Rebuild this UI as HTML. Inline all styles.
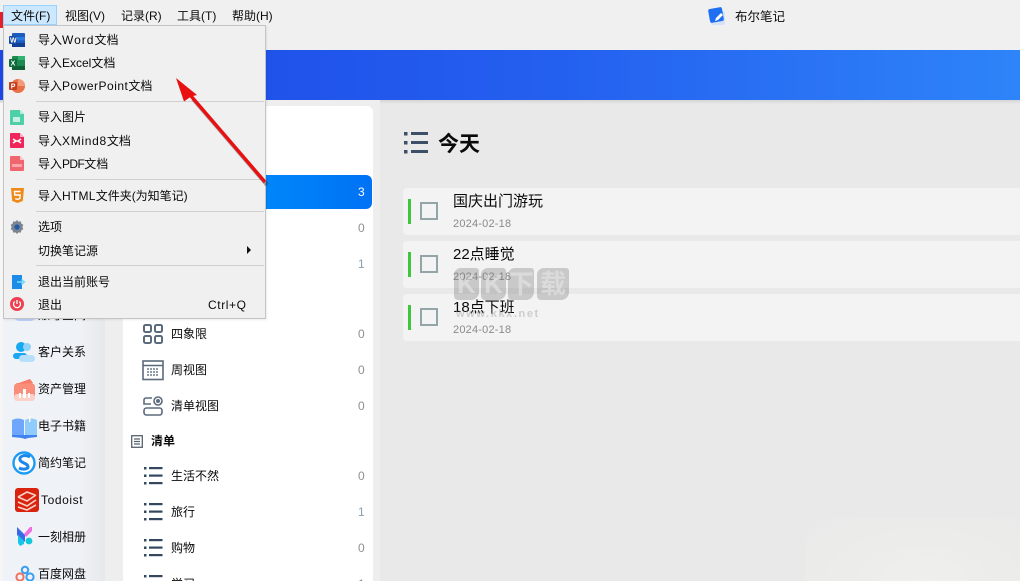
<!DOCTYPE html>
<html lang="zh"><head><meta charset="utf-8"><style>
html,body{margin:0;padding:0;width:1020px;height:581px;overflow:hidden;background:#e9e9e9}
body{position:relative;font-family:"Liberation Sans","Noto Sans CJK SC",sans-serif;font-size:12px;color:#0a0a0a}
.a{position:absolute}
.t{position:absolute;white-space:nowrap;line-height:16px;height:16px}
svg{position:absolute;overflow:visible}
.sep{position:absolute;left:32px;width:228px;height:1px;background:#d0d0d0}
.cnt{position:absolute;left:358px;width:8px;color:#8f8f8f;line-height:16px;font-size:12px}
.card{position:absolute;left:403px;width:617px;height:47px;background:#f3f3f3;border-radius:4px 0 0 4px}
.card i{position:absolute;left:5px;top:11px;width:3px;height:25px;background:#3fc63f}
.card b{position:absolute;left:17px;top:14px;width:14px;height:14px;border:2px solid #93a5a8;background:#f3f3f3;box-sizing:content-box}
.card u{position:absolute;left:50px;top:4px;text-decoration:none;font-size:15px;line-height:20px;color:#0a0a0a;white-space:nowrap}
.card s{position:absolute;left:50px;top:28px;text-decoration:none;font-size:11px;line-height:16px;color:#8a8a8a;letter-spacing:.2px}
.wm{position:absolute;top:268px;height:32px;background:rgba(120,120,120,.34);color:rgba(238,238,238,.5);font-size:26px;line-height:32px;text-align:center;font-weight:700;border-radius:7px 3px 8px 4px}
</style></head><body>
<div class="a" style="left:0;top:0;width:1020px;height:50px;background:#f0f0f0"></div>
<div class="a" style="left:0;top:12px;width:3px;height:16px;background:#e3202a"></div>
<div class="a" style="left:0;top:50px;width:1020px;height:50px;background:linear-gradient(90deg,#1c46e6 0%,#2460ef 55%,#2e84f9 100%)"></div>
<div class="a" style="left:0;top:100px;width:1020px;height:4px;background:linear-gradient(#d4d4d4,#e9e9e9)"></div>
<div class="a" style="left:0;top:103px;width:3px;height:478px;background:#f6f6f6"></div>
<div class="a" style="left:3px;top:100px;width:102px;height:481px;background:linear-gradient(90deg,#eff2f6 0%,#eff2f6 75%,#e6e8ea 100%)"></div>
<div class="a" style="left:105px;top:100px;width:275px;height:481px;background:#eeeeee"></div>
<div class="a" style="left:123px;top:106px;width:250px;height:475px;background:#fff;border-radius:6px 6px 0 0"></div>
<div class="a" style="left:123px;top:175px;width:249px;height:34px;background:linear-gradient(90deg,#00a0ff,#0072f5);border-radius:0 6px 6px 0"></div>
<div class="a" style="left:805px;top:518px;width:215px;height:63px;background:radial-gradient(ellipse at 55% 100%,#efefed 0%,#ebebea 65%,#eaeaea 100%);border-radius:30px 0 0 0"></div>

<!-- title -->
<svg style="left:707px;top:6px" width="20" height="20" viewBox="0 0 20 20"><rect x="4" y="5" width="14" height="14" rx="2" fill="#c9dbfb" opacity=".7"/><rect x="2" y="2" width="14" height="14" rx="2" fill="#1f6ff2" transform="rotate(-10 9 9)"/><path d="M8 15l1-3 5-5 2 2-5 5z" fill="#fff"/></svg>
<div class="t" style="left:735px;top:9px;font-size:12.5px">布尔笔记</div>

<!-- sidebar items -->
<svg style="left:12px;top:302px" width="26" height="20" viewBox="0 0 26 20"><rect x="2" y="5" width="22" height="14" rx="5" fill="#bcd0fa"/><circle cx="11" cy="8" r="6" fill="#5b86f2"/></svg>
<div class="t" style="left:38px;top:307px">账号空间</div>
<svg style="left:12px;top:341px" width="24" height="22" viewBox="0 0 24 22"><circle cx="9" cy="6" r="5" fill="#16a8f2"/><rect x="1" y="12" width="14" height="6" rx="3" fill="#1aa6f5"/><circle cx="15" cy="6" r="4" fill="#8fd3fa"/><rect x="7" y="14" width="16" height="7" rx="3.5" fill="#b6dffb"/></svg>
<div class="t" style="left:38px;top:344px">客户关系</div>
<svg style="left:13px;top:378px" width="24" height="24" viewBox="0 0 24 24"><rect x="1" y="5" width="21" height="18" rx="4" fill="#fb8d7b"/><path d="M3 6l14-5 3 4z" fill="#fa7b66"/><rect x="1" y="16" width="21" height="7" rx="3" fill="#fcd2c8"/><path d="M6 20v-5h2v5zM15 20v-5h2v5zM10 20v-9h3v9z" fill="#fff"/></svg>
<div class="t" style="left:38px;top:381px">资产管理</div>
<svg style="left:12px;top:415px" width="25" height="24" viewBox="0 0 25 24"><path d="M0 5q6-3 12 0v16H0z" fill="#6ea6fb"/><path d="M13 5q6-3 12 0v16H13z" fill="#8fcbfb"/><path d="M0 20h25v2l-9 1-3 1-3-1-10-1z" fill="#3f82f0"/><rect x="17" y="1" width="1.5" height="6" fill="#fff"/></svg>
<div class="t" style="left:38px;top:418px">电子书籍</div>
<svg style="left:12px;top:451px" width="24" height="24" viewBox="0 0 24 24"><circle cx="12" cy="12" r="10.5" fill="#fff" stroke="#1c9bf5" stroke-width="2.4"/><path d="M18 6c-5-3-11-1-10 3 1 3 8 3 8 7 0 2-5 3-9 1" fill="none" stroke="#1c86ee" stroke-width="3"/></svg>
<div class="t" style="left:38px;top:455px">简约笔记</div>
<svg style="left:15px;top:488px" width="24" height="24" viewBox="0 0 24 24"><rect width="24" height="24" rx="3" fill="#d9230f"/><path d="M3 9l9-5 8 3M3 14l9 4 9-6M3 19l9 3 9-5" fill="none" stroke="#f6d5c9" stroke-width="1.6"/><path d="M3 9l9 4 9-6" fill="none" stroke="#f6d5c9" stroke-width="1.6"/></svg>
<div class="t" style="left:41px;top:492px;letter-spacing:.6px">Todoist</div>
<svg style="left:16px;top:526px" width="18" height="20" viewBox="0 0 18 20"><path d="M1 1l8 8v7L1 9z" fill="#3a6ae8"/><path d="M8 8l6-7h2v4l-6 6z" fill="#ef6fe0"/><circle cx="13" cy="15" r="3.4" fill="#12c9d9"/><path d="M2 9l6 6v3l-4 2-2-3z" fill="#18c5ea"/></svg>
<div class="t" style="left:38px;top:529px">一刻相册</div>
<svg style="left:15px;top:566px" width="20" height="16" viewBox="0 0 20 16"><circle cx="10" cy="4" r="3.2" fill="none" stroke="#3a9ff0" stroke-width="2"/><circle cx="5" cy="11" r="3.6" fill="none" stroke="#f2705e" stroke-width="2"/><circle cx="15" cy="11" r="3.6" fill="none" stroke="#3a9ff0" stroke-width="2"/></svg>
<div class="t" style="left:38px;top:566px">百度网盘</div>

<!-- middle list -->
<div class="cnt" style="top:184px;color:#fff">3</div>
<div class="cnt" style="top:220px">0</div>
<div class="cnt" style="top:256px;color:#86a0b0">1</div>
<svg style="left:143px;top:324px" width="20" height="20" viewBox="0 0 20 20" fill="none" stroke="#5b6b7c" stroke-width="2"><rect x="1" y="1" width="7" height="7" rx="1.5"/><rect x="12" y="1" width="7" height="7" rx="1.5"/><rect x="1" y="12" width="7" height="7" rx="1.5"/><rect x="12" y="12" width="7" height="7" rx="1.5"/></svg>
<div class="t" style="left:171px;top:326px">四象限</div><div class="cnt" style="top:326px">0</div>
<svg style="left:142px;top:360px" width="22" height="20" viewBox="0 0 22 20"><rect x="1" y="1" width="20" height="18.5" fill="none" stroke="#5b6b7c" stroke-width="1.6"/><path d="M1 5.5h20" stroke="#5b6b7c" stroke-width="1.4"/><path d="M5 9h12M5 12h12M5 15h12" stroke="#6d7b8a" stroke-width="1.6" stroke-dasharray="2 1"/></svg>
<div class="t" style="left:171px;top:362px">周视图</div><div class="cnt" style="top:362px">0</div>
<svg style="left:143px;top:396px" width="20" height="20" viewBox="0 0 20 20" fill="none" stroke="#5b6b7c" stroke-width="1.6"><path d="M9 2H3a2 2 0 0 0-2 2v4h7"/><circle cx="15" cy="5" r="4"/><circle cx="15" cy="5" r="1.2" fill="#5b6b7c"/><rect x="1" y="12" width="18" height="7" rx="2.5"/></svg>
<div class="t" style="left:171px;top:398px">清单视图</div><div class="cnt" style="top:398px">0</div>
<svg style="left:131px;top:435px" width="12" height="13" viewBox="0 0 12 13" fill="none" stroke="#56636f" stroke-width="1.3"><rect x=".7" y=".7" width="10.6" height="11.6"/><path d="M3 4h6M3 6.5h6M3 9h6"/></svg>
<div class="t" style="left:151px;top:433px;font-weight:700;font-size:12px">清单</div>
<svg style="left:144px;top:467px" width="19" height="18" viewBox="0 0 19 18" fill="#33485f"><rect x="0" y="0" width="2.5" height="2.5"/><rect x="0" y="7.5" width="2.5" height="2.5"/><rect x="0" y="15" width="2.5" height="2.5"/><rect x="5" y="0" width="13.5" height="2.2"/><rect x="5" y="7.5" width="13.5" height="2.2"/><rect x="5" y="15" width="13.5" height="2.2"/></svg>
<div class="t" style="left:171px;top:468px">生活不然</div><div class="cnt" style="top:468px">0</div>
<svg style="left:144px;top:503px" width="19" height="18" viewBox="0 0 19 18" fill="#33485f"><rect x="0" y="0" width="2.5" height="2.5"/><rect x="0" y="7.5" width="2.5" height="2.5"/><rect x="0" y="15" width="2.5" height="2.5"/><rect x="5" y="0" width="13.5" height="2.2"/><rect x="5" y="7.5" width="13.5" height="2.2"/><rect x="5" y="15" width="13.5" height="2.2"/></svg>
<div class="t" style="left:171px;top:504px">旅行</div><div class="cnt" style="top:504px;color:#86a0b0">1</div>
<svg style="left:144px;top:539px" width="19" height="18" viewBox="0 0 19 18" fill="#33485f"><rect x="0" y="0" width="2.5" height="2.5"/><rect x="0" y="7.5" width="2.5" height="2.5"/><rect x="0" y="15" width="2.5" height="2.5"/><rect x="5" y="0" width="13.5" height="2.2"/><rect x="5" y="7.5" width="13.5" height="2.2"/><rect x="5" y="15" width="13.5" height="2.2"/></svg>
<div class="t" style="left:171px;top:540px">购物</div><div class="cnt" style="top:540px">0</div>
<svg style="left:144px;top:575px" width="19" height="18" viewBox="0 0 19 18" fill="#33485f"><rect x="0" y="0" width="2.5" height="2.5"/><rect x="5" y="0" width="13.5" height="2.2"/></svg>
<div class="t" style="left:171px;top:576px">学习</div><div class="cnt" style="top:576px">1</div>

<!-- right -->
<svg style="left:404px;top:132px" width="24" height="22" viewBox="0 0 24 22" fill="#3c4f66"><rect x="0" y="0" width="3.5" height="3.5"/><rect x="0" y="9" width="3.5" height="3.5"/><rect x="0" y="18" width="3.5" height="3.5"/><rect x="7" y="0" width="17" height="3"/><rect x="7" y="9" width="17" height="3"/><rect x="7" y="18" width="17" height="3"/></svg>
<div class="t" style="left:438px;top:131px;font-size:21px;font-weight:700;line-height:28px;height:28px">今天</div>
<div class="card" style="top:188px"><i></i><b></b><u>国庆出门游玩</u><s>2024-02-18</s></div>
<div class="card" style="top:241px"><i></i><b></b><u>22点睡觉</u><s>2024-02-18</s></div>
<div class="card" style="top:294px"><i></i><b></b><u>18点下班</u><s>2024-02-18</s></div>
<!-- watermark -->
<div class="wm" style="left:454px;width:25px">K</div>
<div class="wm" style="left:481px;width:25px">K</div>
<div class="wm" style="left:508px;width:26px">下</div>
<div class="wm" style="left:537px;width:32px">载</div>
<div class="t" style="left:456px;top:306px;font-size:11px;font-weight:700;color:rgba(160,160,160,.45);letter-spacing:1.6px">www.kkx.net</div>

<!-- menu bar -->
<div class="a" style="left:3px;top:5px;width:54px;height:20px;box-sizing:border-box;background:#cce8ff;border:1px solid #99d1ff"></div>
<div class="t" style="left:11px;top:8px">文件(F)</div>
<div class="t" style="left:65px;top:8px">视图(V)</div>
<div class="t" style="left:121px;top:8px">记录(R)</div>
<div class="t" style="left:177px;top:8px">工具(T)</div>
<div class="t" style="left:232px;top:8px">帮助(H)</div>

<!-- dropdown -->
<div class="a" style="left:3px;top:25px;width:263px;height:294px;box-sizing:border-box;background:#f0f0f0;border:1px solid #c4c4c4;box-shadow:1px 1px 2px rgba(0,0,0,.08)">
<div class="sep" style="top:75px"></div><div class="sep" style="top:153px"></div><div class="sep" style="top:185px"></div><div class="sep" style="top:239px"></div>
</div>
<div class="t" style="left:38px;top:32px">导入<span style="letter-spacing:1px">Word</span>文档</div>
<div class="t" style="left:38px;top:55px">导入Excel文档</div>
<div class="t" style="left:38px;top:78px">导入<span style="letter-spacing:.5px">PowerPoint</span>文档</div>
<div class="t" style="left:38px;top:109px">导入图片</div>
<div class="t" style="left:38px;top:133px">导入<span style="letter-spacing:.7px">XMind8</span>文档</div>
<div class="t" style="left:38px;top:156px">导入<span style="letter-spacing:-.6px">PDF</span>文档</div>
<div class="t" style="left:38px;top:188px">导入<span style="letter-spacing:.25px">HTML</span>文件夹(为知笔记)</div>
<div class="t" style="left:38px;top:219px">选项</div>
<div class="t" style="left:38px;top:243px">切换笔记源</div>
<div class="t" style="left:38px;top:274px">退出当前账号</div>
<div class="t" style="left:38px;top:297px">退出</div>
<div class="t" style="left:208px;top:297px;letter-spacing:.6px">Ctrl+Q</div>
<svg style="left:246px;top:246px" width="6" height="8" viewBox="0 0 6 8"><path d="M1 0l4 4-4 4z" fill="#111"/></svg>

<!-- menu icons -->
<svg style="left:9px;top:32px" width="16" height="16" viewBox="0 0 16 16"><rect x="3" y="1" width="13" height="14" rx="1" fill="#1a5cc0"/><rect x="3" y="5" width="13" height="3.4" fill="#2b7ce0"/><rect x="3" y="11" width="13" height="4" fill="#103f94"/><rect x="0" y="4" width="8" height="8" rx="1" fill="#174fa8"/><text x="1" y="10.6" font-size="7" font-weight="700" fill="#fff" font-family="Liberation Sans">W</text></svg>
<svg style="left:9px;top:55px" width="16" height="16" viewBox="0 0 16 16"><rect x="3" y="1" width="13" height="14" rx="1" fill="#1f8a50"/><rect x="9" y="1" width="7" height="4" fill="#2fb272"/><rect x="3" y="11" width="13" height="4" fill="#0f5f35"/><rect x="0" y="4" width="8" height="8" rx="1" fill="#0f6b3c"/><text x="1.6" y="10.6" font-size="7" font-weight="700" fill="#fff" font-family="Liberation Sans">X</text></svg>
<svg style="left:9px;top:78px" width="16" height="16" viewBox="0 0 16 16"><circle cx="9" cy="8" r="7" fill="#ea7048"/><path d="M9 1a7 7 0 0 1 7 7H9z" fill="#f39a78"/><rect x="0" y="4" width="8" height="8" rx="1" fill="#c4401f"/><text x="1.8" y="10.6" font-size="7" font-weight="700" fill="#fff" font-family="Liberation Sans">P</text></svg>
<svg style="left:10px;top:110px" width="14" height="15" viewBox="0 0 14 15"><path d="M0 1a1 1 0 0 1 1-1h9l4 4v10a1 1 0 0 1-1 1H1a1 1 0 0 1-1-1z" fill="#4fcfa8"/><path d="M10 0l4 4h-4z" fill="#b0ecd8"/><rect x="3" y="7" width="7" height="5" fill="#c4f0e2"/></svg>
<svg style="left:10px;top:133px" width="14" height="15" viewBox="0 0 14 15"><path d="M0 1a1 1 0 0 1 1-1h9l4 4v10a1 1 0 0 1-1 1H1a1 1 0 0 1-1-1z" fill="#f0265a"/><path d="M10 0l4 4h-4z" fill="#fbb0c4"/><path d="M3 6l3 2-3 2M11 6L8 8l3 2M5 8h4" fill="none" stroke="#fff" stroke-width="1.6"/></svg>
<svg style="left:10px;top:156px" width="14" height="15" viewBox="0 0 14 15"><path d="M0 1a1 1 0 0 1 1-1h9l4 4v10a1 1 0 0 1-1 1H1a1 1 0 0 1-1-1z" fill="#f0656e"/><path d="M10 0l4 4h-4z" fill="#fbc4c8"/><rect x="2" y="8" width="10" height="3" fill="#f9a6ac"/></svg>
<svg style="left:11px;top:188px" width="13" height="15" viewBox="0 0 13 15"><path d="M0 0h13l-1.2 13L6.5 15 1.2 13z" fill="#ee8a1a"/><path d="M9.5 3.5h-6l.3 3.5h5.4l-.4 3.6-2.3.8-2.3-.8" fill="none" stroke="#fff" stroke-width="1.4"/></svg>
<svg style="left:10px;top:220px" width="14" height="14" viewBox="0 0 14 14"><path d="M7 0l1.5 1.6 2.3-.2.5 2.2 2 1.2-.9 2.2.9 2.2-2 1.2-.5 2.2-2.3-.2L7 14l-1.5-1.6-2.3.2-.5-2.2-2-1.2.9-2.2-.9-2.2 2-1.2.5-2.2 2.3.2z" fill="#7b8490"/><circle cx="7" cy="7" r="2.6" fill="#1f5aa8"/></svg>
<svg style="left:12px;top:275px" width="13" height="14" viewBox="0 0 13 14"><rect width="10" height="14" fill="#1c8ce8"/><path d="M5 7h7M9.5 4.5L12.5 7l-3 2.5" fill="none" stroke="#7fdcf8" stroke-width="1.5"/></svg>
<svg style="left:10px;top:297px" width="14" height="14" viewBox="0 0 14 14"><circle cx="7" cy="7" r="7" fill="#ee3f50"/><path d="M4.7 4.5a3.5 3.5 0 1 0 4.6 0" fill="none" stroke="#fff" stroke-width="1.3"/><path d="M7 3v4" stroke="#fff" stroke-width="1.3"/></svg>

<!-- arrow -->
<svg style="left:0;top:0" width="1020" height="581" viewBox="0 0 1020 581"><path d="M266 184L192 98" stroke="#3a2a2a" stroke-width="4" opacity=".4" transform="translate(1 1)"/><path d="M265 182L191 96" stroke="#e81010" stroke-width="3.4"/><path d="M176 78l21 17-6 1.5-7 5z" fill="#e81010"/></svg>
</body></html>
